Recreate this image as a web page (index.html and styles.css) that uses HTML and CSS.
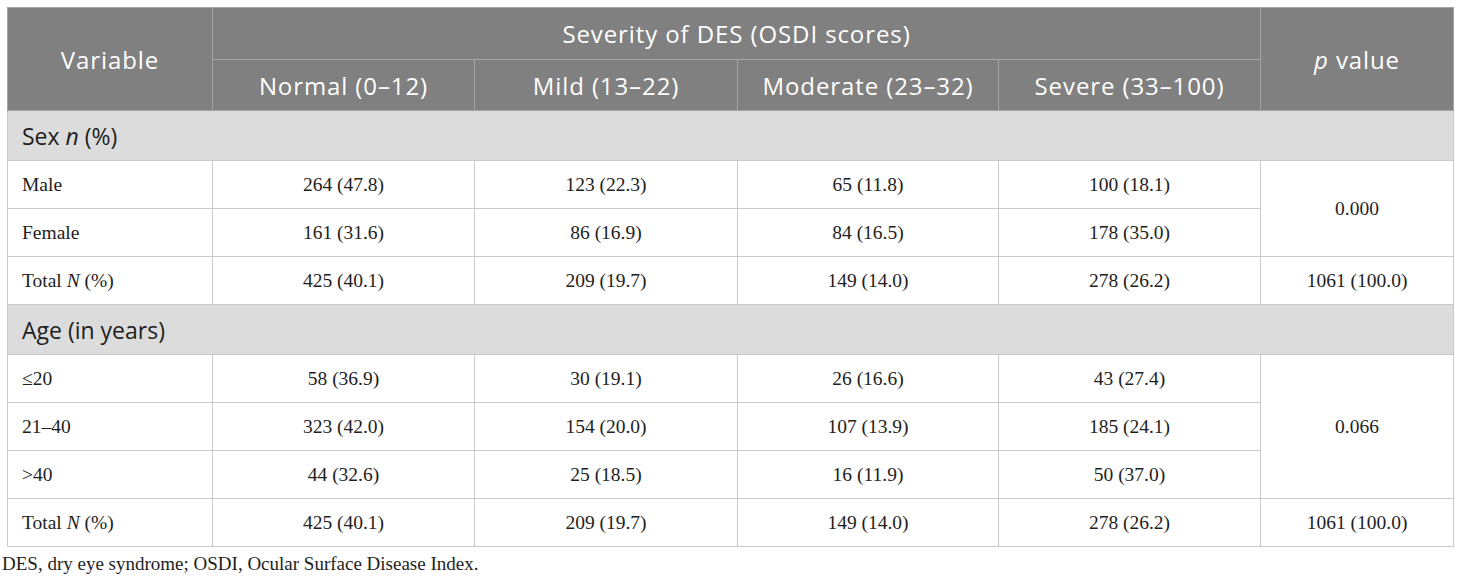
FILE: index.html
```html
<!DOCTYPE html>
<html>
<head>
<meta charset="utf-8">
<link rel="stylesheet" href="styles.css">
</head>
<body>
<div class="page">
<table class="data">
  <colgroup>
    <col class="c1"><col class="c2"><col class="c3"><col class="c4"><col class="c5"><col class="c6">
  </colgroup>
  <thead>
    <tr class="h1">
      <th rowspan="2">Variable</th>
      <th colspan="4">Severity of DES (OSDI scores)</th>
      <th rowspan="2"><i>p</i> value</th>
    </tr>
    <tr class="h2">
      <th>Normal (0–12)</th>
      <th>Mild (13–22)</th>
      <th>Moderate (23–32)</th>
      <th>Severe (33–100)</th>
    </tr>
  </thead>
  <tbody>
    <tr class="sec"><td colspan="6">Sex <i>n</i> (%)</td></tr>
    <tr><td class="lab">Male</td><td>264 (47.8)</td><td>123 (22.3)</td><td>65 (11.8)</td><td>100 (18.1)</td><td rowspan="2">0.000</td></tr>
    <tr><td class="lab">Female</td><td>161 (31.6)</td><td>86 (16.9)</td><td>84 (16.5)</td><td>178 (35.0)</td></tr>
    <tr><td class="lab">Total <i>N</i> (%)</td><td>425 (40.1)</td><td>209 (19.7)</td><td>149 (14.0)</td><td>278 (26.2)</td><td>1061 (100.0)</td></tr>
    <tr class="sec"><td colspan="6">Age (in years)</td></tr>
    <tr><td class="lab">≤20</td><td>58 (36.9)</td><td>30 (19.1)</td><td>26 (16.6)</td><td>43 (27.4)</td><td rowspan="3">0.066</td></tr>
    <tr><td class="lab">21–40</td><td>323 (42.0)</td><td>154 (20.0)</td><td>107 (13.9)</td><td>185 (24.1)</td></tr>
    <tr><td class="lab">&gt;40</td><td>44 (32.6)</td><td>25 (18.5)</td><td>16 (11.9)</td><td>50 (37.0)</td></tr>
    <tr><td class="lab">Total <i>N</i> (%)</td><td>425 (40.1)</td><td>209 (19.7)</td><td>149 (14.0)</td><td>278 (26.2)</td><td>1061 (100.0)</td></tr>
  </tbody>
</table>
<p class="note">DES, dry eye syndrome; OSDI, Ocular Surface Disease Index.</p>
</div>
</body>
</html>
```
FILE: styles.css
```css
html, body {
  margin: 0;
  padding: 0;
  background: #ffffff;
}
.page {
  padding: 7px 0 0 2px;
}
.data {
  margin-left: 5px;
  width: 1446px;
  border-collapse: collapse;
  table-layout: fixed;
}
.c1 { width: 205px; }
.c2 { width: 262px; }
.c3 { width: 263px; }
.c4 { width: 261px; }
.c5 { width: 262px; }
.c6 { width: 193px; }

.data th {
  background: #7f807f;
  color: #ffffff;
  font-family: "Open Sans", "Noto Sans", sans-serif;
  font-weight: 400;
  font-size: 24px;
  letter-spacing: 0.9px;
  text-align: center;
  vertical-align: middle;
  border: 1px solid #a3a4a3;
  padding: 0 6px;
}
.data tr.h1 th { height: 51px; }
.data tr.h2 th { height: 50px; }
.data th i { font-style: italic; }

.data td {
  font-family: "Liberation Serif", "Times New Roman", serif;
  font-size: 19.5px;
  color: #1e1e1e;
  text-align: center;
  vertical-align: middle;
  border: 1px solid #c9c9c9;
  height: 47px;
  padding: 0 14px;
}
.data td.lab { text-align: left; }
.data tr.sec td {
  background: #dcdcdc;
  font-family: "Open Sans", "Noto Sans", sans-serif;
  font-size: 23px;
  color: #1e1e1e;
  text-align: left;
  height: 49px;
}
.note {
  margin: 6px 0 0 0;
  font-family: "Liberation Serif", "Times New Roman", serif;
  font-size: 19px;
  color: #1e1e1e;
}
```
